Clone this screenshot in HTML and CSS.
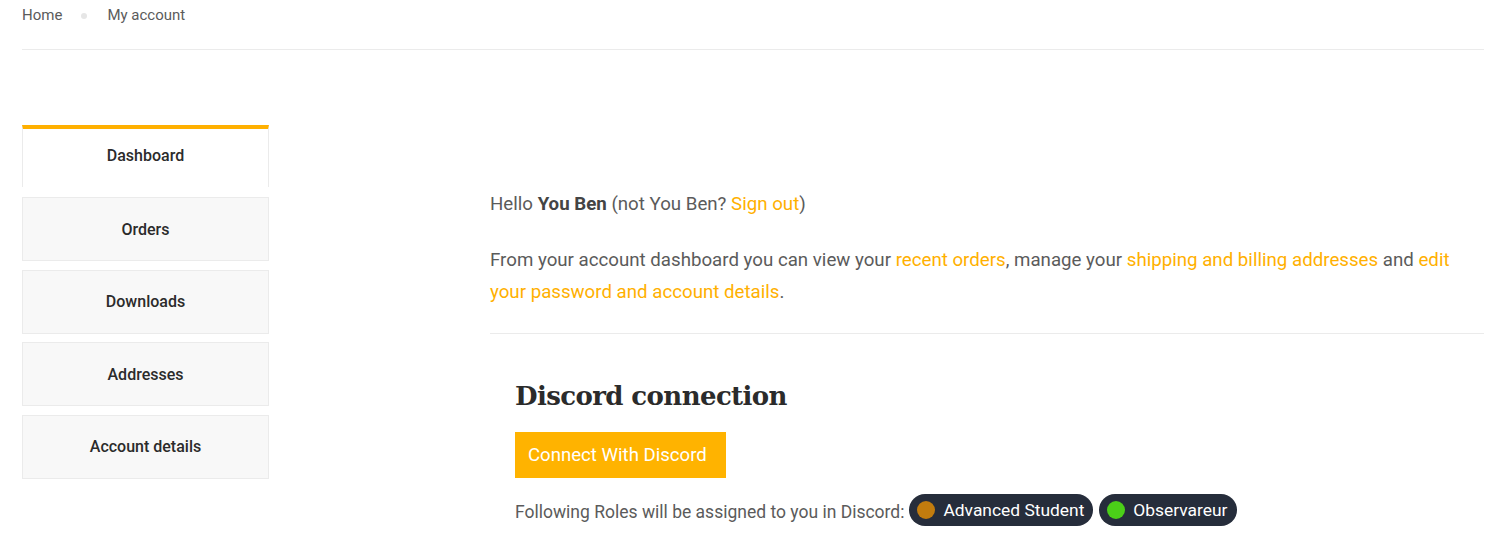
FILE: index.html
```html
<!DOCTYPE html>
<html>
<head>
<meta charset="utf-8">
<link rel="stylesheet" href="styles.css">
</head>
<body>
<div class="page">
  <nav class="breadcrumb">
    <a class="crumb" href="#">Home</a>
    <span class="sep"></span>
    <span class="crumb">My account</span>
  </nav>
  <div class="account">
    <ul class="menu">
      <li class="item active"><a href="#">Dashboard</a></li>
      <li class="item"><a href="#">Orders</a></li>
      <li class="item"><a href="#">Downloads</a></li>
      <li class="item"><a href="#">Addresses</a></li>
      <li class="item"><a href="#">Account details</a></li>
    </ul>
    <div class="content">
      <p class="hello">Hello <strong>You Ben</strong> (not You Ben? <a href="#">Sign out</a>)</p>
      <p class="intro">From your account dashboard you can view your <a href="#">recent orders</a>, manage your <a href="#">shipping and billing addresses</a> and <a href="#">edit your password and account details</a>.</p>
      <div class="discord">
        <h2>Discord connection</h2>
        <a class="btn" href="#">Connect With Discord</a>
        <p class="roles"><span class="roles-label">Following Roles will be assigned to you in Discord:</span>
          <span class="pill"><span class="dot brown"></span>Advanced Student</span>
          <span class="pill"><span class="dot green"></span>Observareur</span>
        </p>
      </div>
    </div>
  </div>
</div>
</body>
</html>
```

FILE: styles.css
```css
* { box-sizing: border-box; }
html, body { margin: 0; padding: 0; background: #fff; }
body { font-family: Roboto, "Liberation Sans", sans-serif; color: #5b5b5b; }
a { text-decoration: none; color: #ffb000; }

.page { padding: 0 10px 0 22px; }

.breadcrumb {
  display: flex;
  align-items: center;
  box-sizing: content-box;
  height: 30px;
  padding-bottom: 19px;
  font-size: 15px;
  border-bottom: 1px solid #ebebeb;
}
.crumb { color: #5b5b5b; }
.sep {
  width: 6px; height: 6px; border-radius: 50%;
  background: #e6e6e6;
  margin: 2px 20px 0 19px;
}

.account {
  display: grid;
  grid-template-columns: 247px 1fr;
  column-gap: 221px;
  padding-top: 75px;
}

.menu { list-style: none; margin: 0; padding: 0; display: flex; flex-direction: column; gap: 8.5px; }
.item a {
  display: flex; align-items: center; justify-content: center;
  height: 64px;
  background: #f8f8f8;
  border: 1px solid #ebebeb;
  color: #2b2b2b;
  font-size: 16px;
  font-weight: 500;
}
.item.active a {
  background: #fff;
  border-top: 4px solid #ffb000;
  border-bottom: none;
  height: 62px;
  padding-bottom: 5px;
  margin-bottom: 1.5px;
}

.content { padding-top: 63px; font-size: 18.7px; }
.content p { margin: 0; }
.hello { line-height: 32px; margin-bottom: 24px !important; }
.hello strong { color: #444; font-weight: 700; }
.intro { line-height: 32px; padding-bottom: 25px; border-bottom: 1px solid #ebebeb; }

.discord { padding: 44px 25px 0 25px; }
.discord h2 {
  margin: 0 0 18px 0;
  font-family: "DejaVu Serif", "Liberation Serif", serif;
  font-weight: 700;
  font-size: 26px;
  letter-spacing: -0.6px;
  color: #2b2b2b;
  line-height: 36px;
}
.btn {
  display: inline-block;
  background: #ffb300;
  color: #fff;
  font-size: 18.6px;
  line-height: 46px;
  height: 46px;
  padding: 0 19px 0 13px;
}
.roles { margin-top: 16px !important; font-size: 17.5px; color: #5b5b5b; display: flex; align-items: center; }
.roles-label { padding-top: 4px; }
.pill {
  display: inline-flex; align-items: center;
  background: #262d3b;
  color: #fff;
  height: 32px;
  border-radius: 16px;
  padding: 0 9px 0 8px;
  font-size: 17.4px;
  margin-left: 5px;
}
.pill + .pill { margin-left: 6px; }
.dot { width: 18px; height: 18px; border-radius: 50%; margin-right: 8px; display: inline-block; }
.brown { background: #c27c0e; }
.green { background: #4bcf18; }
```
